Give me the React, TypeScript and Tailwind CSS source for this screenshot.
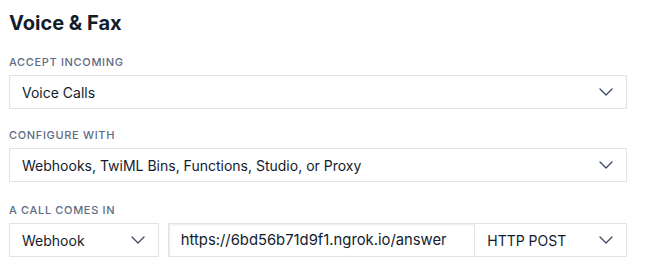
import React from "react";

function Chevron() {
  return (
    <svg width="14" height="8" viewBox="0 0 14 8" fill="none" className="shrink-0">
      <path d="M1 1l6 6 6-6" stroke="#394762" strokeWidth="1.3" strokeLinecap="round" strokeLinejoin="round" />
    </svg>
  );
}

function Label({ children }: { children: React.ReactNode }) {
  return (
    <div className="text-[11px] font-medium uppercase tracking-[0.06em] text-[#606b85] leading-none">
      {children}
    </div>
  );
}

function Select({ value, className = "" }: { value: string; className?: string }) {
  return (
    <div
      className={`flex h-[34px] items-center justify-between border border-[#e1e3ea] bg-white pl-3 pr-[13px] text-[14px] text-[#121c2d] ${className}`}
    >
      <span>{value}</span>
      <Chevron />
    </div>
  );
}

export default function App() {
  return (
    <div
      className="h-[267px] w-[645px] overflow-hidden bg-white pl-[9px] pr-[18px] pt-[11px]"
      style={{ fontFamily: "Inter, 'Noto Sans', sans-serif" }}
    >
      <h2 className="text-[20px] font-bold leading-[24px] text-[#121c2d]">Voice &amp; Fax</h2>

      <div className="mt-[22px]">
        <Label>Accept Incoming</Label>
        <Select value="Voice Calls" className="mt-[7px]" />
      </div>

      <div className="mt-[21px]">
        <Label>Configure With</Label>
        <Select value="Webhooks, TwiML Bins, Functions, Studio, or Proxy" className="mt-[7px]" />
      </div>

      <div className="mt-[23px]">
        <Label>A Call Comes In</Label>
        <div className="mt-[7px] flex">
          <Select value="Webhook" className="w-[150px]" />
          <div className="ml-[9px] flex h-[34px] w-[308px] items-center border border-[#e1e3ea] bg-white pl-3 text-[14.8px] text-[#121c2d] shadow-[inset_1px_1px_2px_rgba(0,0,0,0.08)]">
            https://6bd56b71d9f1.ngrok.io/answer
          </div>
          <Select value="HTTP POST" className="w-[152px] border-l-0" />
        </div>
      </div>
    </div>
  );
}
